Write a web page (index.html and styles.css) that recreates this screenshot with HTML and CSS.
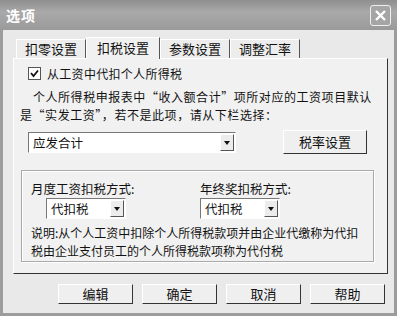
FILE: index.html
```html
<!DOCTYPE html>
<html lang="zh-CN">
<head>
    <meta charset="UTF-8">
    <title>选项</title>
    <link rel="stylesheet" href="styles.css">
</head>
<body>
    <div class="window">
        <div class="titlebar">
            <span class="title">选项</span>
            <span class="close">
                <svg width="13" height="13" viewBox="0 0 13 13"><path d="M2 2 L11 11 M11 2 L2 11" stroke="#fff" stroke-width="2.4"/></svg>
            </span>
        </div>
        <div class="content">
            <div class="tabs">
                <div class="tab">扣零设置</div>
                <div class="tab active">扣税设置</div>
                <div class="tab">参数设置</div>
                <div class="tab">调整汇率</div>
            </div>
            <div class="panel">
                <label class="check">
                    <span class="box">
                        <svg width="9" height="9" viewBox="0 0 9 9"><path d="M1 4 L3.5 7 L8 1.5" fill="none" stroke="#111" stroke-width="1.8"/></svg>
                    </span>
                    从工资中代扣个人所得税
                </label>
                <p class="note">&nbsp;&nbsp;&nbsp;&nbsp;个人所得税申报表中“收入额合计”项所对应的工资项目默认是“实发工资”，若不是此项，请从下栏选择：</p>
                <div class="row">
                    <div class="select wide">
                        <span class="value">应发合计</span>
                        <span class="arrow"></span>
                    </div>
                    <div class="btn rate">税率设置</div>
                </div>
                <div class="group">
                    <div class="cols">
                        <div class="col">
                            <div class="label">月度工资扣税方式:</div>
                            <div class="select small indent">
                                <span class="value">代扣税</span>
                                <span class="arrow"></span>
                            </div>
                        </div>
                        <div class="col">
                            <div class="label">年终奖扣税方式:</div>
                            <div class="select small">
                                <span class="value">代扣税</span>
                                <span class="arrow"></span>
                            </div>
                        </div>
                    </div>
                    <p class="desc">说明:从个人工资中扣除个人所得税款项并由企业代缴称为代扣税由企业支付员工的个人所得税款项称为代付税</p>
                </div>
            </div>
            <div class="buttons">
                <div class="btn">编辑</div>
                <div class="btn">确定</div>
                <div class="btn">取消</div>
                <div class="btn">帮助</div>
            </div>
        </div>
    </div>
</body>
</html>
```
FILE: styles.css
```css
body {
    margin: 0;
    font-family: "Noto Sans CJK SC", "DejaVu Sans", sans-serif;
    font-size: 12px;
    color: #111;
    background: #fff;
}
.window {
    width: 397px;
    height: 316px;
    box-sizing: border-box;
    background: #e9e9e9;
    border: 3px solid #9c9c9c;
    border-top: none;
    display: flex;
    flex-direction: column;
}
.titlebar {
    height: 30px;
    margin: 0 -3px;
    background: linear-gradient(#8f8f8f, #a9a9a9 40%, #9a9a9a);
    display: flex;
    align-items: center;
    justify-content: space-between;
    padding: 0 6px;
}
.title {
    color: #fff;
    font-weight: bold;
    font-size: 14px;
    letter-spacing: 1px;
}
.close {
    width: 19px;
    height: 19px;
    border: 1px solid #eee;
    border-radius: 3px;
    background: #a5a5a5;
    display: flex;
    align-items: center;
    justify-content: center;
}
.content {
    flex: 1;
    padding: 8px 6px 0 10px;
}
.tabs {
    display: flex;
    padding-left: 3px;
    height: 20px;
    align-items: flex-end;
}
.tab {
    padding: 0 8px;
    height: 18px;
    line-height: 18px;
    font-size: 13px;
    border-top: 1px solid #fff;
    border-left: 1px solid #fff;
    border-right: 1px solid #555;
    background: #ededed;
}
.tab.active {
    height: 21px;
    line-height: 20px;
    background: #f1f1f1;
    margin-bottom: -1px;
    position: relative;
    z-index: 1;
    padding: 0 10px;
}
.panel {
    height: 216px;
    border: 1px solid #fff;
    border-right-color: #333;
    border-bottom-color: #333;
    background: #f1f1f1;
    padding: 6px 8px 0 14px;
    box-sizing: border-box;
}
.check {
    display: flex;
    align-items: center;
    gap: 6px;
    font-size: 12px;
    letter-spacing: 0.3px;
}
.box {
    width: 11px;
    height: 11px;
    border: 1px solid #555;
    background: #fff;
    display: flex;
    align-items: center;
    justify-content: center;
}
.note {
    margin: 6px 0 0 -8px;
    font-size: 12px;
    line-height: 18px;
    letter-spacing: 0.55px;
}
.row {
    display: flex;
    align-items: center;
    justify-content: space-between;
    margin-top: 6px;
    padding-right: 12px;
}
.select {
    height: 21px;
    border: 1px solid #777;
    border-right-color: #fff;
    border-bottom-color: #fff;
    background: #fff;
    display: flex;
    align-items: center;
    justify-content: space-between;
    box-sizing: border-box;
    padding: 1px;
}
.value {
    padding-left: 3px;
    font-size: 12.5px;
}
.arrow {
    width: 14px;
    height: 17px;
    background: #ececec;
    border: 1px solid #fff;
    border-right-color: #555;
    border-bottom-color: #555;
    box-sizing: border-box;
    position: relative;
}
.arrow::after {
    content: "";
    position: absolute;
    left: 3px;
    top: 6px;
    border-left: 3.5px solid transparent;
    border-right: 3.5px solid transparent;
    border-top: 4px solid #111;
}
.wide {
    width: 208px;
}
.small {
    width: 80px;
}
.indent {
    margin-left: 15px;
}
.btn {
    width: 75px;
    height: 20px;
    line-height: 18px;
    text-align: center;
    font-size: 13px;
    background: #efefef;
    border: 1px solid #fff;
    border-right-color: #333;
    border-bottom-color: #333;
    box-sizing: border-box;
}
.btn.rate {
    width: 84px;
    height: 24px;
    line-height: 22px;
}
.group {
    margin: 16px 5px 0 -7px;
    border: 1px solid #aaa;
    box-shadow: 1px 1px 0 #fff, inset 1px 1px 0 #fff;
    padding: 10px 4px 0 9px;
    height: 92px;
    box-sizing: border-box;
}
.cols {
    display: flex;
}
.col {
    width: 174px;
}
.label {
    font-size: 12.5px;
    line-height: 16px;
    margin-bottom: 1px;
}
.desc {
    margin: 5px 0 0;
    font-size: 12px;
    line-height: 18px;
}
.buttons {
    display: flex;
    gap: 9px;
    padding-left: 45px;
    margin-top: 10px;
}
```
